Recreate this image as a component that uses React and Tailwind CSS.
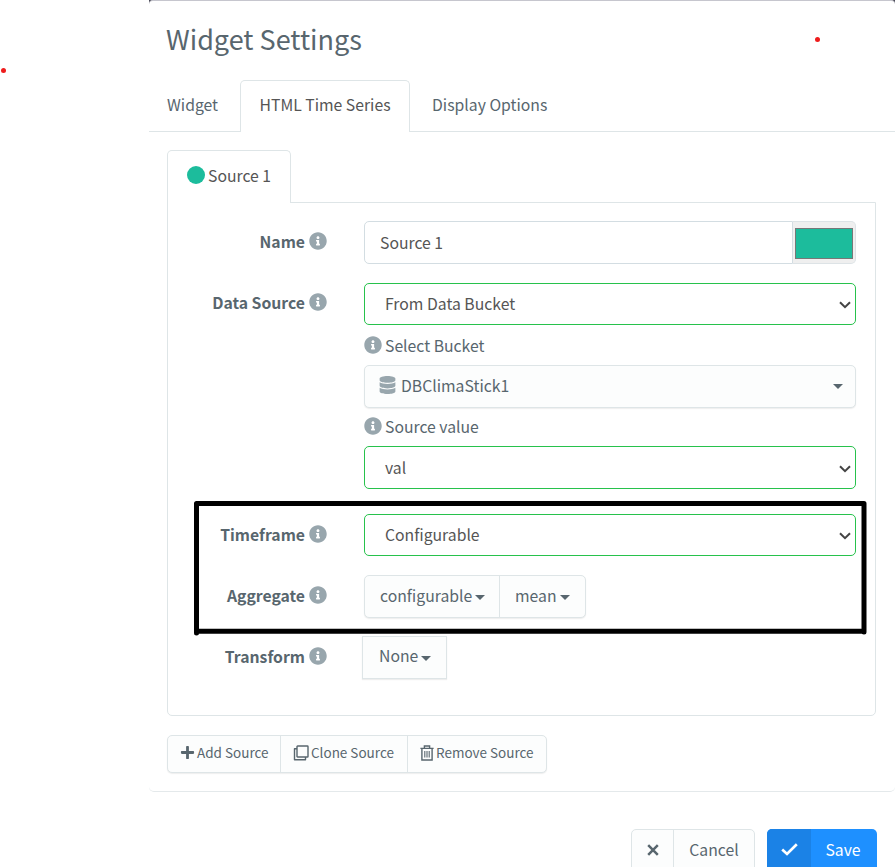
import { FaInfoCircle, FaDatabase, FaPlus } from "react-icons/fa";

function Info({ className = "" }) {
  return <FaInfoCircle className={"size-[18px] shrink-0 text-[#98a6ad] " + className} />;
}

function Label({ children, className = "pb-0.5" }) {
  return (
    <div className={"flex h-[42px] w-[159px] shrink-0 items-center justify-end gap-1 font-bold " + className}>
      <span className="pt-0.5">{children}</span>
      <Info className="-mt-px" />
    </div>
  );
}

function Row({ label, labelClass, className, children }) {
  return (
    <div className={"flex " + className}>
      <Label className={labelClass}>{label}</Label>
      <div className="ml-[37px] w-[492px]">{children}</div>
    </div>
  );
}

function Select({ children, className }) {
  return (
    <div className={"flex items-center justify-between rounded-[5px] border border-[#27c24c] pr-1 pl-5 text-[#555] " + className}>
      <span>{children}</span>
      <svg viewBox="0 0 12 8" className="mt-0.5 h-2 w-3">
        <path d="M1 1.2 6 6.2 11 1.2" fill="none" stroke="#444" strokeWidth="2" />
      </svg>
    </div>
  );
}

function Hint({ children, className }) {
  return (
    <div className={"flex items-center gap-[3px] " + className}>
      <Info />
      <span className="pt-0.5">{children}</span>
    </div>
  );
}

function Caret({ className = "" }) {
  return (
    <svg viewBox="0 0 10 5" className={"h-[5px] w-2.5 shrink-0 " + className}>
      <path d="M0 0H10L5 5Z" fill="#58666e" />
    </svg>
  );
}

function CloneIcon() {
  return (
    <svg viewBox="0 0 16 16" className="size-4" fill="none" stroke="#58666e" strokeWidth="1.4" strokeLinejoin="round">
      <rect x="4" y="1" width="11" height="11" rx="0.6" />
      <path d="M4 3.7H1.5V14.7H12.5V12" />
    </svg>
  );
}

function TrashIcon() {
  return (
    <svg viewBox="0 0 14 16" className="h-4 w-3.5" fill="none" stroke="#58666e" strokeWidth="1.4">
      <path d="M0.4 3.4H13.6M4.4 3V1H9.6V3M1.9 3.6V15H12.1V3.6" />
      <path d="M4.8 6V12.6M7 6V12.6M9.2 6V12.6" strokeWidth="1.1" />
    </svg>
  );
}

function CloseIcon() {
  return (
    <svg viewBox="0 0 12 12" className="size-3" fill="none" stroke="#58666e" strokeWidth="2.5">
      <path d="M1.2 1.2 10.8 10.8M10.8 1.2 1.2 10.8" />
    </svg>
  );
}

function CheckIcon() {
  return (
    <svg viewBox="0 0 17 13" className="h-[13px] w-[17px]" fill="none" stroke="#fff" strokeWidth="2.7">
      <path d="M1.2 6.6 6 11 15.8 1.3" />
    </svg>
  );
}

export default function App() {
  return (
    <div className="relative flex h-[867px] w-[895px] overflow-hidden bg-white pl-[149px] font-['Noto_Sans_CJK_SC','Noto_Sans',sans-serif] text-[15.75px] leading-5 text-[#58666e]">
      <div className="absolute top-[67.5px] left-[0.5px] size-[5px] rounded-full bg-[#ee1c1c]" />
      <div className="absolute top-[36.5px] left-[814.5px] size-[5px] rounded-full bg-[#ee1c1c]" />
      <div className="h-[867px] w-[746px] shrink-0 bg-[#4a4a58]">
        <div className="h-[867px] rounded-t-[4px] border-t border-[#c6c6ce] bg-white">
          <h1 className="flex h-[79px] items-center pb-1 pl-[17px] text-[27px]">Widget Settings</h1>

          <div className="flex h-[52px] border-b border-[#dee5e7]">
            <div className="flex w-[91px] items-center pb-0.5 pl-[18px]">Widget</div>
            <div className="-mb-px flex w-[170px] items-center justify-center rounded-t-[5px] border border-b-0 border-[#dee5e7] bg-white pb-1 text-[#555]">
              HTML Time Series
            </div>
            <div className="flex items-center pb-0.5 pl-[22px]">Display Options</div>
          </div>

          <div className="h-[660px] rounded-b-[5px] border-b border-[#e4e9eb] pt-[18px] pl-[18px]">
            <div className="relative flex h-[53px] w-[124px] items-center gap-[3px] rounded-t-[5px] border border-b-0 border-[#dee5e7] bg-white pb-1 pl-[19px] text-[#555]">
              <span className="size-[18px] rounded-full bg-[#1cbc9c]" />
              <span className="pt-0.5">Source 1</span>
            </div>
            <div className="-mt-px h-[514px] w-[709px] rounded-b-[5px] border border-[#dee5e7] pt-[18px]">
              <Row label="Name" className="h-[62px]">
                <div className="flex h-[43px]">
                  <div className="flex w-[429px] items-center rounded-l-[5px] border border-[#d3dde2] pl-[15px] text-[#555]">Source 1</div>
                  <div className="flex-1 rounded-r-[5px] border border-l-0 border-[#dde3e6] bg-[#efefef] px-0.5 pt-1.5 pb-1">
                    <div className="h-[31px] border border-[#777] bg-[#1cbc9c]" />
                  </div>
                </div>
              </Row>
              <Row label="Data Source" labelClass="pb-1" className="h-[231px]">
                <Select className="h-[42px]">From Data Bucket</Select>
                <Hint className="h-10">Select Bucket</Hint>
                <div className="flex h-[43px] items-center rounded-[5px] border border-[#dee5e7] bg-[#fcfdfd] pr-3 pl-[14px] shadow-[0_1px_1px_rgba(90,90,90,0.1)]">
                  <FaDatabase className="mr-[5px] mb-[3px] h-[18px] w-[17px] text-[#98a6ad]" />
                  <span className="flex-1 pb-px">DBClimaStick1</span>
                  <Caret />
                </div>
                <Hint className="h-[38px] pb-0.5">Source value</Hint>
                <Select className="h-[43px]">val</Select>
              </Row>
              <Row label="Timeframe" className="h-[61px]">
                <Select className="h-[42px]">Configurable</Select>
              </Row>
              <Row label="Aggregate" className="h-[61px]">
                <div className="flex h-[43px] w-[222px] rounded-[5px] border border-[#dee5e7] bg-[#fcfdfd] shadow-[0_1px_1px_rgba(90,90,90,0.1)]">
                  <div className="flex w-[135px] items-center gap-[3px] border-r border-[#dee5e7] pb-px pl-[15px]">
                    configurable
                    <Caret className="mt-0.5" />
                  </div>
                  <div className="flex items-center gap-[3px] pb-px pl-[15px]">
                    mean
                    <Caret className="mt-0.5" />
                  </div>
                </div>
              </Row>
              <Row label="Transform" className="h-[43px]">
                <div className="-ml-0.5 flex h-[43px] w-[85px] items-center gap-[3px] border border-[#dee5e7] bg-[#fcfdfd] pb-1 pl-4 shadow-[0_1px_1px_rgba(90,90,90,0.1)]">
                  None
                  <Caret className="mt-1.5" />
                </div>
              </Row>
            </div>

            <div className="mt-[19px] flex h-[38px] w-[380px] rounded-[5px] border border-[#dee5e7] bg-[#fcfdfd] text-[13.5px] shadow-[0_1px_1px_rgba(90,90,90,0.1)]">
              <div className="flex w-[113px] items-center gap-0.5 border-r border-[#dee5e7] pb-[3px] pl-3">
                <FaPlus className="size-[15px]" />
                <span className="pb-0.5">Add Source</span>
              </div>
              <div className="flex w-[127px] items-center gap-0.5 border-r border-[#dee5e7] pb-[3px] pl-3">
                <CloneIcon />
                <span className="pb-0.5">Clone Source</span>
              </div>
              <div className="flex items-center gap-0.5 pb-[3px] pl-3">
                <TrashIcon />
                <span className="pb-0.5">Remove Source</span>
              </div>
            </div>
          </div>

          <div className="flex justify-end gap-3 pt-[37px] pr-[18px]">
            <div className="flex h-[43px] w-[124px] rounded-[5px] border border-[#dee5e7] bg-[#fcfdfd]">
              <div className="flex w-[42px] items-center justify-center border-r border-[#dee5e7] pb-0.5">
                <CloseIcon />
              </div>
              <div className="flex flex-1 items-center justify-center pb-0.5">Cancel</div>
            </div>
            <div className="flex h-[43px] w-[110px] overflow-hidden rounded-[5px] bg-[#1e90ff] text-white">
              <div className="flex w-11 items-center justify-center bg-[#1b82e6] pb-0.5">
                <CheckIcon />
              </div>
              <div className="flex flex-1 items-center justify-center pr-0.5 pb-0.5">Save</div>
            </div>
          </div>
        </div>
      </div>

      <svg viewBox="0 0 680 140" className="absolute top-[498px] left-[190px] h-[140px] w-[680px]" fill="none" stroke="#000" strokeWidth="5" strokeLinecap="round">
        <path d="M6.5 5.5V135M6.5 5.5H674M674 5.5V134M6.5 133.3H673" />
      </svg>
    </div>
  );
}
